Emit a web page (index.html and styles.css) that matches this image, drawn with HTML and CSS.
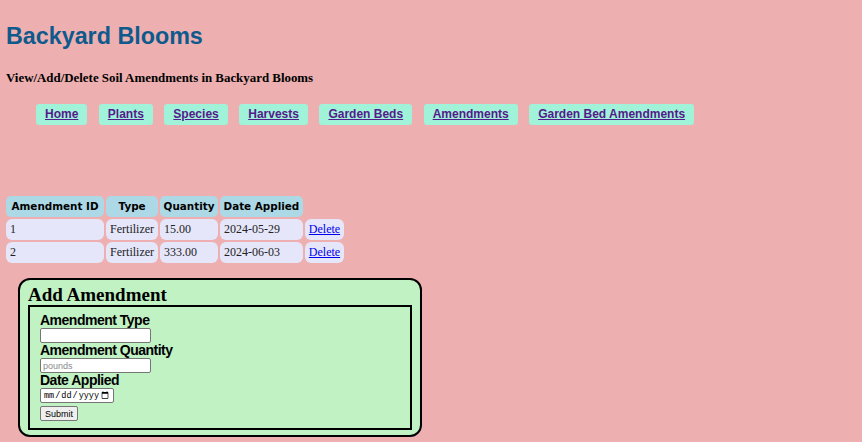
FILE: index.html
```html
<!DOCTYPE html>
<html lang="en">
<head>
<meta charset="utf-8">
<title>Backyard Blooms - Amendments</title>
<link rel="stylesheet" href="styles.css">
</head>
<body>
<header class="site-header">
  <h1 class="site-title">Backyard Blooms</h1>
  <h2 class="page-subtitle">View/Add/Delete Soil Amendments in Backyard Blooms</h2>
  <nav class="main-nav">
    <a class="nav-link" href="#">Home</a>
    <a class="nav-link" href="#">Plants</a>
    <a class="nav-link" href="#">Species</a>
    <a class="nav-link" href="#">Harvests</a>
    <a class="nav-link" href="#">Garden Beds</a>
    <a class="nav-link" href="#">Amendments</a>
    <a class="nav-link" href="#">Garden Bed Amendments</a>
  </nav>
</header>
<main class="content">
  <table class="data-table">
    <thead>
      <tr>
        <th class="col-id">Amendment ID</th>
        <th>Type</th>
        <th>Quantity</th>
        <th>Date Applied</th>
      </tr>
    </thead>
    <tbody>
      <tr>
        <td>1</td>
        <td>Fertilizer</td>
        <td>15.00</td>
        <td>2024-05-29</td>
        <td><a class="delete-link" href="#">Delete</a></td>
      </tr>
      <tr>
        <td>2</td>
        <td>Fertilizer</td>
        <td>333.00</td>
        <td>2024-06-03</td>
        <td><a class="delete-link" href="#">Delete</a></td>
      </tr>
    </tbody>
  </table>

  <section class="add-panel">
    <h2 class="add-title">Add Amendment</h2>
    <form class="add-form">
      <label class="field-label" for="atype">Amendment Type</label>
      <input class="field-input" type="text" id="atype">
      <label class="field-label" for="aqty">Amendment Quantity</label>
      <input class="field-input" type="text" id="aqty" placeholder="pounds">
      <label class="field-label" for="adate">Date Applied</label>
      <input class="field-date" type="date" id="adate">
      <button class="submit-btn" type="button">Submit</button>
    </form>
  </section>
</main>
</body>
</html>
```

FILE: styles.css
```css
html, body {
  margin: 0;
  padding: 0;
}

body {
  background: #edafaf;
  padding: 0 6px;
  font-family: "Liberation Serif", serif;
  color: #000;
}

.site-title {
  margin: 0;
  padding-top: 22px;
  font-family: "Liberation Sans", Arial, sans-serif;
  font-size: 23.3px;
  line-height: 28px;
  font-weight: bold;
  color: #0f5a8d;
}

.page-subtitle {
  margin: 21px 0 0 0;
  font-family: "Liberation Serif", serif;
  font-size: 12.9px;
  line-height: 15px;
  font-weight: bold;
}

.main-nav {
  display: flex;
  gap: 11.5px;
  margin-top: 18px;
  padding-left: 30px;
}

.nav-link {
  display: block;
  background: #a0f2d9;
  border-radius: 3px;
  padding: 3px 9px;
  font-family: "Liberation Sans", Arial, sans-serif;
  font-size: 12px;
  line-height: 15px;
  font-weight: bold;
  color: #551a8b;
  text-decoration: underline;
}

.content {
  padding-top: 69px;
}

.data-table {
  border-collapse: separate;
  border-spacing: 2px;
  margin-left: -2px;
}

.data-table th {
  background: #add8e6;
  border-radius: 5px;
  padding: 4px 3.5px;
  font-family: "DejaVu Sans", Verdana, sans-serif;
  font-size: 10.4px;
  line-height: 13px;
  font-weight: bold;
  text-align: center;
}

.data-table th.col-id {
  padding: 4px 5.5px;
}

.data-table td {
  background: #e6e6fa;
  border-radius: 6px;
  padding: 4px 4px;
  font-family: "Liberation Serif", serif;
  font-size: 12px;
  line-height: 13px;
  color: #222;
}

.delete-link {
  color: #0000ee;
  text-decoration: underline;
}

.add-panel {
  box-sizing: border-box;
  width: 404px;
  margin: 13px 0 0 12px;
  background: #c1f2c3;
  border: 2px solid #000;
  border-radius: 12px;
  padding: 4px 8px 5px 8px;
}

.add-title {
  margin: 0;
  font-family: "Liberation Serif", serif;
  font-size: 19px;
  line-height: 21px;
  font-weight: bold;
}

.add-form {
  display: flex;
  flex-direction: column;
  align-items: flex-start;
  border: 2px solid #000;
  padding: 6px 10px 7px 10px;
}

.field-label {
  font-family: "Liberation Sans", Arial, sans-serif;
  font-size: 14px;
  letter-spacing: -0.5px;
  line-height: 15px;
  font-weight: bold;
}

.field-input {
  box-sizing: border-box;
  width: 111px;
  height: 15px;
  margin: 0;
  padding: 0 2px;
  border: 1px solid #767676;
  border-radius: 2px;
  background: #fff;
  font-family: "Liberation Sans", Arial, sans-serif;
  font-size: 9px;
}

.field-input::placeholder {
  color: #8a8a8a;
}

.field-date {
  box-sizing: border-box;
  width: 74px;
  height: 15px;
  margin: 0;
  padding: 0 2px;
  border: 1px solid #767676;
  border-radius: 2px;
  background: #fff;
  font-family: "Liberation Mono", monospace;
  font-size: 8.5px;
}

.submit-btn {
  box-sizing: border-box;
  margin-top: 3px;
  height: 15px;
  padding: 0 4px;
  border: 1px solid #767676;
  border-radius: 2px;
  background: #efefef;
  font-family: "Liberation Sans", Arial, sans-serif;
  font-size: 9px;
  color: #000;
}
```
